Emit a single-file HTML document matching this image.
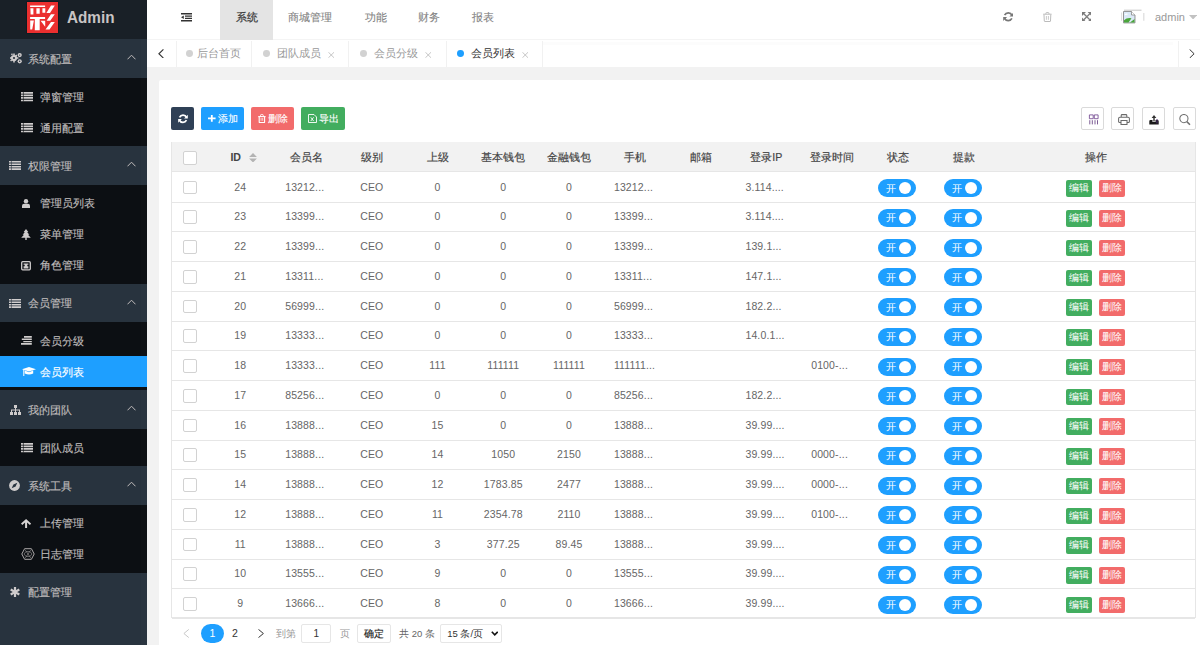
<!DOCTYPE html>
<html><head><meta charset="utf-8"><title>Admin</title>
<style>
*{margin:0;padding:0;box-sizing:border-box}
html,body{width:1200px;height:645px;overflow:hidden}
body{position:relative;background:#f2f2f2;font-family:"Liberation Sans",sans-serif;font-size:11px;color:#666}
.abs{position:absolute}
.ic{position:absolute}
/* sidebar */
.side{position:absolute;left:0;top:0;width:147px;height:645px;background:#28333e}
.scr{position:absolute;left:141px;top:39.3px;width:6px;height:606px;background:rgba(255,255,255,0.01)}
.logo{position:absolute;left:0;top:0;width:147px;height:39.3px;background:#192027}
.logo .mk{position:absolute;left:27.2px;top:1.9px;width:31px;height:31px;background:#eb2f2f;box-shadow:0 0 0 0.6px #0d1a1f}
.logo .mk svg{position:absolute;left:0;top:0}
.logo .tx{position:absolute;left:67px;top:7px;font-size:16.5px;font-weight:bold;color:#c8c4c4;line-height:20px;transform:scaleX(0.925);transform-origin:0 0}
.grp{position:absolute;left:0;width:147px;height:38.6px;color:#bfbbbb;font-size:11px}
.grp .t{position:absolute;left:28.4px;top:0.5px;line-height:38.6px}
.grp .ar{position:absolute;left:126.5px;top:15px;width:9px;height:6px}
.kids{position:absolute;left:0;width:147px;background:#0c0f13}
.kid{position:absolute;left:0;width:147px;height:30.95px;color:#bfbbbb;font-size:11px}
.kid .t{position:absolute;left:39.6px;top:0.6px;line-height:30.95px}
.kid.on{background:#1e9fff;color:#fff}
/* header */
.hdr{position:absolute;left:147px;top:0;width:1053px;height:40px;background:#fff;border-bottom:1px solid #f4f4f4}
.nav{position:absolute;top:0;height:39.6px;line-height:34.5px;color:#858585;font-size:10.8px;-webkit-text-stroke-width:0.12px}
.nav.on{background:#e4e4e4;color:#3a3a3a}
/* tabs */
.tabs{position:absolute;left:147px;top:40px;width:1053px;height:27px;background:#fff}
.vl{position:absolute;top:40.5px;width:1px;height:26.5px;background:#f1f1f1}
.tline{position:absolute;left:543px;top:42.3px;width:629.5px;height:2.4px;background:#fcfcfc}
.dot{position:absolute;top:50px;width:6.8px;height:6.8px;border-radius:50%;background:#d2d2d2}
.tt{position:absolute;top:40px;line-height:27px;color:#999;font-size:10.8px}
.x{position:absolute;top:51.5px}
.card{position:absolute;left:159.3px;top:80px;width:1050px;height:600px;background:#fff;border-radius:2px}
.btn{position:absolute;top:107.3px;height:22.7px;border-radius:2px;color:#fff;font-size:9.5px;line-height:22.7px;text-align:center}
.bl{position:absolute;top:0.6px;-webkit-text-stroke-width:0.12px}
.tbtn{position:absolute;top:107.3px;width:23px;height:23.2px;border:1px solid #dadada;border-radius:2px;background:#fff}
/* table */
.table{position:absolute;left:0;top:0}
.tframe{position:absolute;left:171px;top:141.6px;width:1024.8px;height:476.4px;border:1px solid #e6e6e6}
.thead{position:absolute;left:172px;width:1023px;background:#f2f2f2;border-bottom:1px solid #e6e6e6}
.th{position:absolute;text-align:center;color:#444;font-size:10.6px;font-weight:normal;-webkit-text-stroke:0.18px #444;white-space:nowrap}
.td{position:absolute;text-align:center;color:#666;font-size:10.5px;letter-spacing:0.15px;white-space:nowrap}
.td.ell{text-align:left;padding-left:12px}
.rowb{position:absolute;left:172px;width:1023px;height:1px;background:#e6e6e6}
.cb{position:absolute;width:13.8px;height:13.8px;border:1px solid #d2d2d2;border-radius:2px;background:#fff}
.sort{position:absolute;width:8px;height:12px}
.sort i{position:absolute;left:0;width:0;height:0;border-left:3.75px solid transparent;border-right:3.75px solid transparent}
.sort .up{top:0;border-bottom:3.75px solid #b5b5b5}
.sort .dn{top:5.25px;border-top:3.75px solid #b5b5b5}
.sw{position:absolute;width:38px;height:18px;border-radius:9px;background:#1e9fff;color:#fff}
.sw span{position:absolute;left:8.5px;top:0.5px;line-height:18px;font-size:10px}
.sw i{position:absolute;left:21.5px;top:3px;width:12px;height:12px;border-radius:50%;background:#fff}
.bt{position:absolute;width:26px;height:16.7px;border-radius:2px;color:#fff;font-size:9.5px;line-height:16.7px;text-align:center}
.bt.g{background:#42ad5f}
.bt.r{background:#f26b6b}
.grp .t,.kid .t{-webkit-text-stroke-width:0.15px}
.nav.on{-webkit-text-stroke-width:0.2px}

</style></head><body>
<div class="side">
  <div class="logo">
    <div class="mk"><svg width="31" height="31" viewBox="0 0 31 31"><path fill="#fff" d="M3.1 3.4H18.1V5H3.1z M3.4 6.3H6.4V12.6H3.6z M9.4 6.3H12.7V11.8H9.4z M15.4 6.3H18.3V10.8H15.4z M3.1 15H18.1V16.9H3.1z M7.8 16.9H12.7V28.2H7.8z M3.2 18.6H6.9L5.2 27.6H3.2z M13.6 18.8H18.2V24.8z M24 3.4H27.8L23 10.9H19.4z M24 12.2H27.8L23.2 18.8H19.6z M24 20H27.8L22.5 27.6H18.5z"/></svg></div>
    <div class="tx">Admin</div>
  </div>
  <!-- g1 -->
  <div class="grp" style="top:39.3px">
    <svg class="ic" style="left:9.5px;top:13px" width="13" height="12" viewBox="0 0 13 12"><g fill="#cfcccc"><circle cx="4" cy="6" r="3.1"/><path d="M3.2 1.6h1.6v1.4h-1.6zM3.2 9h1.6v1.4h-1.6zM-0.4 5.2h1.4v1.6h-1.4zM7 5.2h1.4v1.6H7zM0.9 2.3l1.1-1.1 1 1-1.1 1.1zM5 6.4l1.1-1.1 1 1-1.1 1.1zM1.1 9.6l-1-1 1.1-1.1 1 1zM6.2 4.7l-1-1 1.1-1.1 1 1z"/><circle cx="9.7" cy="3.1" r="2.1"/><circle cx="9.7" cy="9.3" r="2.1"/></g><circle cx="4" cy="6" r="1.1" fill="#28333e"/><circle cx="9.7" cy="3.1" r="0.7" fill="#28333e"/><circle cx="9.7" cy="9.3" r="0.7" fill="#28333e"/></svg>
    <span class="t">系统配置</span>
    <svg class="ar" viewBox="0 0 9 6"><path d="M0.5 5.3 L4.5 1.2 L8.5 5.3" fill="none" stroke="#bfbbbb" stroke-width="1"/></svg>
  </div>
  <div class="kids" style="top:77.9px;height:68.1px">
    <div class="kid" style="top:3.1px"><svg class="ic" style="left:20.7px;top:11.2px" width="12" height="9.4" viewBox="0 0 12 9.4"><path d="M0 0h12v1.7H0zM0 2.55h12v1.7H0zM0 5.1h12v1.7H0zM0 7.65h12v1.7H0z" fill="#d0cdcd"/><path d="M2.4 0v9.4" stroke="#0c0f13" stroke-width="0.6"/></svg><span class="t">弹窗管理</span></div>
    <div class="kid" style="top:34.05px"><svg class="ic" style="left:20.7px;top:11.2px" width="12" height="9.4" viewBox="0 0 12 9.4"><path d="M0 0h12v1.7H0zM0 2.55h12v1.7H0zM0 5.1h12v1.7H0zM0 7.65h12v1.7H0z" fill="#d0cdcd"/><path d="M2.4 0v9.4" stroke="#0c0f13" stroke-width="0.6"/></svg><span class="t">通用配置</span></div>
  </div>
  <!-- g2 -->
  <div class="grp" style="top:146px">
    <svg class="ic" style="left:9.3px;top:15px" width="12" height="9" viewBox="0 0 12 9"><path d="M0 0h12v1.6H0zM0 2.45h12v1.6H0zM0 4.9h12v1.6H0zM0 7.35h12v1.6H0z" fill="#d0cdcd"/><path d="M2.4 0v9" stroke="#28333e" stroke-width="0.6"/></svg>
    <span class="t">权限管理</span>
    <svg class="ar" viewBox="0 0 9 6"><path d="M0.5 5.3 L4.5 1.2 L8.5 5.3" fill="none" stroke="#bfbbbb" stroke-width="1"/></svg>
  </div>
  <div class="kids" style="top:184.6px;height:99.05px">
    <div class="kid" style="top:3.1px"><svg class="ic" style="left:21.5px;top:11.5px" width="8" height="9" viewBox="0 0 8 9"><circle cx="4" cy="2.3" r="2.2" fill="#cfcccc"/><path d="M0 9 V6.8 Q0 4.8 2.2 4.8 H5.8 Q8 4.8 8 6.8 V9z" fill="#cfcccc"/></svg><span class="t">管理员列表</span></div>
    <div class="kid" style="top:34.05px"><svg class="ic" style="left:21px;top:10px" width="10" height="11" viewBox="0 0 10 11"><path d="M5 0 L7.3 3 H6.2 L8.3 5.7 H7 L9.8 8.8 H5.7 V11 H4.3 V8.8 H0.2 L3 5.7 H1.7 L3.8 3 H2.7z" fill="#cfcccc"/></svg><span class="t">菜单管理</span></div>
    <div class="kid" style="top:65px"><svg class="ic" style="left:21px;top:11.5px" width="10" height="9.5" viewBox="0 0 10 9.5"><rect x="0.7" y="0.7" width="8.6" height="8.1" rx="1" fill="none" stroke="#cfcccc" stroke-width="1.3"/><path d="M2.6 2.4h4.8v1.3H6.3v1.5h1.1v2.3H2.6V5.2h1.1V3.7H2.6z" fill="#cfcccc"/></svg><span class="t">角色管理</span></div>
  </div>
  <!-- g3 -->
  <div class="grp" style="top:283.65px">
    <svg class="ic" style="left:9.3px;top:15px" width="12" height="9" viewBox="0 0 12 9"><path d="M0 0h12v1.6H0zM0 2.45h12v1.6H0zM0 4.9h12v1.6H0zM0 7.35h12v1.6H0z" fill="#d0cdcd"/><path d="M2.4 0v9" stroke="#28333e" stroke-width="0.6"/></svg>
    <span class="t">会员管理</span>
    <svg class="ar" viewBox="0 0 9 6"><path d="M0.5 5.3 L4.5 1.2 L8.5 5.3" fill="none" stroke="#bfbbbb" stroke-width="1"/></svg>
  </div>
  <div class="kids" style="top:322.25px;height:68.1px">
    <div class="kid" style="top:3.1px"><svg class="ic" style="left:21.2px;top:10.7px" width="11" height="9" viewBox="0 0 11 9"><path d="M3 0h7.8v1.8H3zM0.8 2.6h10v1.4h-10zM2.3 4.9h8.5v1.3H2.3zM0 7.1h10.8v1.7H0z" fill="#d0cdcd"/></svg><span class="t">会员分级</span></div>
    <div class="kid on" style="top:34.05px"><svg class="ic" style="left:21.5px;top:10.7px" width="14" height="9.5" viewBox="0 0 14 9.5"><path d="M0 2.3 L7 0 L14 2.3 L7 4.6z M2.8 3.6 V6.6 Q7 8.3 11.2 6.6 V3.6 L7 5.2z M1.3 2.6 H2.3 V9.3 H1.3z" fill="#fff"/></svg><span class="t">会员列表</span></div>
  </div>
  <!-- g4 -->
  <div class="grp" style="top:390.35px">
    <svg class="ic" style="left:9.5px;top:14.5px" width="11" height="10" viewBox="0 0 11 10"><path d="M4 0h3v3H6v1.5h4V7h1v3H8V7h1V5.5H6V7h1v3H4V7h1V5.5H2V7h1v3H0V7h1V4.5h4V3H4z" fill="#cfcccc"/></svg>
    <span class="t">我的团队</span>
    <svg class="ar" viewBox="0 0 9 6"><path d="M0.5 5.3 L4.5 1.2 L8.5 5.3" fill="none" stroke="#bfbbbb" stroke-width="1"/></svg>
  </div>
  <div class="kids" style="top:428.95px;height:37.15px">
    <div class="kid" style="top:3.1px"><svg class="ic" style="left:20.7px;top:11.2px" width="12" height="9.4" viewBox="0 0 12 9.4"><path d="M0 0h12v1.7H0zM0 2.55h12v1.7H0zM0 5.1h12v1.7H0zM0 7.65h12v1.7H0z" fill="#d0cdcd"/><path d="M2.4 0v9.4" stroke="#0c0f13" stroke-width="0.6"/></svg><span class="t">团队成员</span></div>
  </div>
  <!-- g5 -->
  <div class="grp" style="top:466.1px">
    <svg class="ic" style="left:9px;top:14px" width="11" height="11" viewBox="0 0 11 11"><circle cx="5.5" cy="5.5" r="5.4" fill="#cfcccc"/><path d="M8.3 2.7 L6.6 6.6 L2.7 8.3 L4.4 4.4z" fill="#28333e"/></svg>
    <span class="t">系统工具</span>
    <svg class="ar" viewBox="0 0 9 6"><path d="M0.5 5.3 L4.5 1.2 L8.5 5.3" fill="none" stroke="#bfbbbb" stroke-width="1"/></svg>
  </div>
  <div class="kids" style="top:504.7px;height:68.1px">
    <div class="kid" style="top:3.1px"><svg class="ic" style="left:21.2px;top:11.3px" width="10.2" height="9.4" viewBox="0 0 10.2 9.4"><path d="M5.1 0 L10.2 4.6 L8.9 5.9 L6.1 3.5 V9.4 H4.1 V3.5 L1.3 5.9 L0 4.6z" fill="#d6d3d3"/></svg><span class="t">上传管理</span></div>
    <div class="kid" style="top:34.05px"><svg class="ic" style="left:20.6px;top:9.6px" width="14" height="12" viewBox="0 0 14 12"><path d="M3.6 0.7 H10.4 L13.2 6 L10.4 11.3 H3.6 L0.8 6z" fill="none" stroke="#bdb9b9" stroke-width="0.9"/><path d="M4.3 2.2 L9.7 9.8 M9.7 2.2 L4.3 9.8 M3 6 L5 3.6 H9 L11 6 L9 8.4 H5z" fill="none" stroke="#8d8a8a" stroke-width="0.7"/></svg><span class="t">日志管理</span></div>
  </div>
  <!-- g6 -->
  <div class="grp" style="top:572.8px">
    <svg class="ic" style="left:10px;top:14.5px" width="10" height="10" viewBox="0 0 10 10"><path d="M5 0v10M0.7 2.5l8.6 5M0.7 7.5l8.6-5" stroke="#cfcccc" stroke-width="2.2"/></svg>
    <span class="t">配置管理</span>
  </div>
  <div class="scr"></div>
</div>

<!-- header -->
<div class="hdr"></div>
<svg class="ic" style="left:180.5px;top:13px" width="11.5" height="8.5" viewBox="0 0 11.5 8.5"><path d="M0 0h11.5v1.4H0zM4 2.4h7.5v1.4H4zM4 4.7h7.5v1.4H4zM0 7.1h11.5v1.4H0zM0 4.25 L2.8 2.4 V6.1z" fill="#333"/></svg>
<div class="nav on" style="left:220px;width:53px;text-align:center">系统</div>
<div class="nav" style="left:288.3px">商城管理</div>
<div class="nav" style="left:364.8px">功能</div>
<div class="nav" style="left:418px">财务</div>
<div class="nav" style="left:472px">报表</div>
<svg class="ic" style="left:1002.5px;top:12px" width="10.5" height="9.5" viewBox="0 0 10.5 9.5"><path d="M9 3.4 A4.1 4.1 0 0 0 1.6 3.2 M1.5 6.1 A4.1 4.1 0 0 0 8.9 6.3" fill="none" stroke="#777" stroke-width="1.7"/><path d="M10.3 0.6 V4.5 H6.4z M0.2 8.9 V5 H4.1z" fill="#777"/></svg>
<svg class="ic" style="left:1042.8px;top:11.8px" width="8.8" height="10" viewBox="0 0 8.8 10"><path d="M0.2 2.2h8.4" stroke="#bbb" stroke-width="1"/><path d="M2.9 2.2V1.2Q2.9 0.5 3.6 0.5h1.6q0.7 0 0.7 0.7v1" fill="none" stroke="#bbb" stroke-width="0.9"/><path d="M1 2.6 L1.3 9.1 Q1.3 9.5 1.8 9.5 H7 Q7.5 9.5 7.5 9.1 L7.8 2.6" fill="none" stroke="#bbb" stroke-width="1"/><path d="M3.4 4v3.8M5.4 4v3.8" stroke="#bbb" stroke-width="0.8"/></svg>
<svg class="ic" style="left:1081.6px;top:11.9px" width="9.6" height="9.6" viewBox="0 0 9.6 9.6"><path d="M1.8 1.8 L7.8 7.8 M7.8 1.8 L1.8 7.8" stroke="#808080" stroke-width="1.3"/><path d="M0 0h4L0 4zM9.6 0v4L5.6 0zM0 9.6V5.6L4 9.6zM9.6 9.6H5.6L9.6 5.6z" fill="#7a7a7a"/></svg>
<svg class="ic" style="left:1120px;top:9px" width="26" height="14" viewBox="0 0 26 14"><path d="M4 1.2 H21.5" stroke="#c4c4c4" stroke-width="1"/><path d="M1.6 3.5 V11.8" stroke="#dcdcdc" stroke-width="1"/><path d="M23.8 4 V11.8" stroke="#dcdcdc" stroke-width="1.2"/></svg>
<svg class="ic" style="left:1123px;top:11.4px" width="12.5" height="12.4" viewBox="0 0 12.5 12.4"><path d="M0.5 0.5 H8.5 L12 4 V11.9 H0.5z" fill="#dbe9f7" stroke="#8a8a8a" stroke-width="0.9"/><path d="M8.5 0.5 V4 H12" fill="#fff" stroke="#8a8a8a" stroke-width="0.8"/><path d="M1 11.5 L1 9.2 Q4 6.5 8.5 7.3 L5.5 11.5z M7 11.5 L11.5 8 V11.5z" fill="#4aa63b"/><path d="M2 3.8 Q3 2.8 4.5 3.4" fill="none" stroke="#fff" stroke-width="1.2"/></svg>
<div class="abs" style="left:1155px;top:0;line-height:34.5px;color:#999;font-size:11px">admin</div>
<svg class="ic" style="left:1188.7px;top:14.7px" width="8.2" height="4.5" viewBox="0 0 8.2 4.5"><path d="M0 0h8.2L4.1 4.5z" fill="#c2c2c2"/></svg>

<!-- tabs -->
<div class="tabs"></div>
<div class="vl" style="left:175.5px"></div>
<div class="vl" style="left:251.4px"></div>
<div class="vl" style="left:348.3px"></div>
<div class="vl" style="left:445.5px"></div>
<div class="vl" style="left:542.4px"></div>
<div class="vl" style="left:1177.9px"></div>
<div class="tline"></div>
<svg class="ic" style="left:158px;top:48.6px" width="6" height="9.5" viewBox="0 0 6 9.5"><path d="M5.4 0.4 L0.9 4.75 L5.4 9.1" fill="none" stroke="#333" stroke-width="1.1"/></svg>
<svg class="ic" style="left:1189px;top:48.7px" width="6" height="9.5" viewBox="0 0 6 9.5"><path d="M0.6 0.4 L5.1 4.75 L0.6 9.1" fill="none" stroke="#333" stroke-width="1"/></svg>
<i class="dot" style="left:186.2px"></i><span class="tt" style="left:197px">后台首页</span>
<i class="dot" style="left:263.1px"></i><span class="tt" style="left:276.5px">团队成员</span><svg class="x" style="left:327.6px" width="6.5" height="6" viewBox="0 0 6.5 6"><path d="M0.4 0.2 L6.1 5.8 M6.1 0.2 L0.4 5.8" stroke="#b8b8b8" stroke-width="0.8"/></svg>
<i class="dot" style="left:360.2px"></i><span class="tt" style="left:374px">会员分级</span><svg class="x" style="left:424.9px" width="6.5" height="6" viewBox="0 0 6.5 6"><path d="M0.4 0.2 L6.1 5.8 M6.1 0.2 L0.4 5.8" stroke="#b8b8b8" stroke-width="0.8"/></svg>
<i class="dot" style="left:456.9px;background:#1e9fff"></i><span class="tt" style="left:471px;color:#333">会员列表</span><svg class="x" style="left:521.7px" width="6.5" height="6" viewBox="0 0 6.5 6"><path d="M0.4 0.2 L6.1 5.8 M6.1 0.2 L0.4 5.8" stroke="#b8b8b8" stroke-width="0.8"/></svg>

<div class="card"></div>
<div class="btn" style="left:171px;width:23px;background:#2f4056"><svg style="position:absolute;left:6.5px;top:6.8px" width="10" height="9.5" viewBox="0 0 10.5 9.5"><path d="M9 3.4 A4.1 4.1 0 0 0 1.6 3.2 M1.5 6.1 A4.1 4.1 0 0 0 8.9 6.3" fill="none" stroke="#fff" stroke-width="1.8"/><path d="M10.3 0.6 V4.5 H6.4z M0.2 8.9 V5 H4.1z" fill="#fff"/></svg></div>
<div class="btn" style="left:200.8px;width:43px;background:#1e9fff"><svg style="position:absolute;left:7.4px;top:8.2px" width="7.6" height="6.8" viewBox="0 0 7.6 6.8"><path d="M2.9 0h1.8v2.5h2.9v1.8H4.7v2.5H2.9V4.3H0V2.5h2.9z" fill="#fff"/></svg><span class="bl" style="left:17.5px">添加</span></div>
<div class="btn" style="left:251px;width:43.2px;background:#f26b6b"><svg style="position:absolute;left:6.9px;top:6.6px" width="7.8" height="9.2" viewBox="0 0 7.8 9.2"><path d="M0.2 2.6h7.4" stroke="#fff" stroke-width="1.1"/><path d="M2.6 2.3V1.2Q2.6 0.5 3.3 0.5h1.2q0.7 0 0.7 0.7v1.1" fill="none" stroke="#fff" stroke-width="0.9"/><path d="M1.2 3 V8 Q1.2 8.6 1.8 8.6 H6 Q6.6 8.6 6.6 8 V3" fill="none" stroke="#fff" stroke-width="1.1"/><path d="M3.1 4v2.8M4.7 4v2.8" stroke="#fff" stroke-width="0.7"/></svg><span class="bl" style="left:17px">删除</span></div>
<div class="btn" style="left:301.4px;width:43.4px;background:#42ad5f"><svg style="position:absolute;left:6.6px;top:7px" width="9" height="9" viewBox="0 0 9 9"><path d="M0.5 0.5 H6 L8.5 3 V8.5 H0.5z" fill="none" stroke="#fff" stroke-width="0.9"/><path d="M2.8 3.3 L5.6 7 M5.6 3.3 L2.8 7" stroke="#fff" stroke-width="0.9"/></svg><span class="bl" style="left:17.6px">导出</span></div>

<div class="tbtn" style="left:1081.3px"><svg style="position:absolute;left:5.7px;top:5.7px" width="11" height="11" viewBox="0 0 11 11"><path d="M1.4 0.9h3.8v3.8H1.4zM6.3 0.9h3.8v3.8H6.3z" fill="none" stroke="#6b3d8a" stroke-width="0.8"/><path d="M1.8 6.2v4.2M4.3 6.2v4.2M7 6.2v4.2M9.5 6.2v4.2" stroke="#6d4a88" stroke-width="0.9"/></svg></div>
<div class="tbtn" style="left:1111.3px"><svg style="position:absolute;left:5.5px;top:5.6px" width="12" height="11" viewBox="0 0 12 11"><path d="M3.2 3.2V1.5Q3.2 0.6 4.1 0.6h3.8q0.9 0 0.9 0.9V3.2M3 8.5H1.6Q0.6 8.5 0.6 7.5V4.6Q0.6 3.3 1.9 3.3h8.2q1.3 0 1.3 1.3v2.9q0 1-1 1H9M3 6.4h6v4H3z" fill="none" stroke="#6a6a6a" stroke-width="1.05"/></svg></div>
<div class="tbtn" style="left:1142px"><svg style="position:absolute;left:6px;top:6.3px" width="10" height="10" viewBox="0 0 10 10"><path d="M0.3 6.3 Q0.3 5 1.5 5 H3.5 V7 H6.5 V5 H8.5 Q9.7 5 9.7 6.3 V9.5 H0.3z" fill="#1a1a1a"/><path d="M4.3 6.5 V3 H2.6 L5 0 L7.4 3 H5.7 V6.5z" fill="#333"/><path d="M8 4v4.5" stroke="#4a2a6a" stroke-width="1"/></svg></div>
<div class="tbtn" style="left:1172.5px"><svg style="position:absolute;left:5.5px;top:5.5px" width="12" height="12" viewBox="0 0 12 12"><circle cx="4.9" cy="4.6" r="4.1" fill="none" stroke="#707070" stroke-width="1.05"/><path d="M7.8 7.6 L11 10.8" stroke="#707070" stroke-width="1.5"/></svg></div>

<div class="tframe"></div>

<!-- pager -->
<svg class="ic" style="left:183.2px;top:629px" width="6.3" height="9" viewBox="0 0 6.3 9"><path d="M5.8 0.4 L0.9 4.5 L5.8 8.6" fill="none" stroke="#c8c8c8" stroke-width="1"/></svg>
<div class="abs" style="left:200.7px;top:623.7px;width:23.6px;height:19.6px;border-radius:10px;background:#1e9fff;color:#fff;text-align:center;line-height:19.6px;font-size:10.5px">1</div>
<div class="abs" style="left:229px;top:623.7px;width:12px;line-height:19.6px;text-align:center;color:#333;font-size:10.5px">2</div>
<svg class="ic" style="left:258px;top:629px" width="6.3" height="9" viewBox="0 0 6.3 9"><path d="M0.5 0.4 L5.4 4.5 L0.5 8.6" fill="none" stroke="#333" stroke-width="1"/></svg>
<div class="abs" style="left:275.5px;top:623.7px;line-height:19.6px;color:#999;font-size:9.5px">到第</div>
<div class="abs" style="left:301.2px;top:623.7px;width:30.3px;height:19.8px;border:1px solid #e6e6e6;border-radius:2px;background:#fff;text-align:center;line-height:18px;color:#333;font-size:10px">1</div>
<div class="abs" style="left:339.5px;top:623.7px;line-height:19.6px;color:#999;font-size:9.5px">页</div>
<div class="abs" style="left:356.7px;top:623.7px;width:34.5px;height:19.8px;border:1px solid #e6e6e6;border-radius:2px;background:#fff;text-align:center;line-height:18px;color:#222;font-size:9.6px;-webkit-text-stroke-width:0.15px">确定</div>
<div class="abs" style="left:399px;top:623.7px;line-height:19.6px;color:#666;font-size:9.5px">共 20 条</div>
<div class="abs" style="left:440.2px;top:623.7px;width:61.4px;height:19.8px;border:1px solid #e6e6e6;border-radius:2px;background:#fff;line-height:18px;color:#333;font-size:9.5px;padding-left:6px">15 条/页</div>
<svg class="ic" style="left:490.7px;top:631px" width="7.5" height="5" viewBox="0 0 7.5 5"><path d="M0.8 0.8 L3.75 3.8 L6.7 0.8" fill="none" stroke="#111" stroke-width="1.6"/></svg>

<div class="table">
<div class="thead" style="top:142.0px;height:29.75px"></div><div class="cb" style="left:183.3px;top:150.8px"></div><div class="th" style="left:230.4px;top:142.0px;height:29.75px;line-height:30.75px;font-weight:bold;-webkit-text-stroke:0">ID</div><svg class="abs" style="left:248.6px;top:152.9px" width="8" height="9.6" viewBox="0 0 8 9.6"><path d="M4 0.1 L7.9 4 H0.1z M0.1 5.5 H7.9 L4 9.5z" fill="#b3b3b3"/></svg><div class="th" style="left:273.15px;width:65.75px;top:142.0px;height:29.75px;line-height:30.75px">会员名</div><div class="th" style="left:338.9px;width:65.75px;top:142.0px;height:29.75px;line-height:30.75px">级别</div><div class="th" style="left:404.65px;width:65.75px;top:142.0px;height:29.75px;line-height:30.75px">上级</div><div class="th" style="left:470.4px;width:65.75px;top:142.0px;height:29.75px;line-height:30.75px">基本钱包</div><div class="th" style="left:536.15px;width:65.75px;top:142.0px;height:29.75px;line-height:30.75px">金融钱包</div><div class="th" style="left:601.9px;width:65.75px;top:142.0px;height:29.75px;line-height:30.75px">手机</div><div class="th" style="left:667.65px;width:65.75px;top:142.0px;height:29.75px;line-height:30.75px">邮箱</div><div class="th" style="left:733.4px;width:65.75px;top:142.0px;height:29.75px;line-height:30.75px">登录IP</div><div class="th" style="left:799.15px;width:65.75px;top:142.0px;height:29.75px;line-height:30.75px">登录时间</div><div class="th" style="left:864.9px;width:65.75px;top:142.0px;height:29.75px;line-height:30.75px">状态</div><div class="th" style="left:930.65px;width:65.75px;top:142.0px;height:29.75px;line-height:30.75px">提款</div><div class="th" style="left:996.4px;width:198.89999999999998px;top:142.0px;height:29.75px;line-height:30.75px">操作</div><div class="rowb" style="top:201.5px"></div><div class="cb" style="left:183.3px;top:180.55px"></div><div class="td" style="left:207.4px;width:65.75px;top:172.55px;height:29.75px;line-height:29.75px">24</div><div class="td ell" style="left:273.15px;width:65.75px;top:172.55px;height:29.75px;line-height:29.75px">13212...</div><div class="td" style="left:338.9px;width:65.75px;top:172.55px;height:29.75px;line-height:29.75px">CEO</div><div class="td" style="left:404.65px;width:65.75px;top:172.55px;height:29.75px;line-height:29.75px">0</div><div class="td" style="left:470.4px;width:65.75px;top:172.55px;height:29.75px;line-height:29.75px">0</div><div class="td" style="left:536.15px;width:65.75px;top:172.55px;height:29.75px;line-height:29.75px">0</div><div class="td ell" style="left:601.9px;width:65.75px;top:172.55px;height:29.75px;line-height:29.75px">13212...</div><div class="td ell" style="left:733.4px;width:65.75px;top:172.55px;height:29.75px;line-height:29.75px">3.114....</div><div class="sw" style="left:877.9px;top:179.05px"><span>开</span><i></i></div><div class="sw" style="left:943.65px;top:179.05px"><span>开</span><i></i></div><div class="bt g" style="left:1065.8px;top:180.25px">编辑</div><div class="bt r" style="left:1099.3px;top:180.25px">删除</div><div class="rowb" style="top:231.25px"></div><div class="cb" style="left:183.3px;top:210.3px"></div><div class="td" style="left:207.4px;width:65.75px;top:202.3px;height:29.75px;line-height:29.75px">23</div><div class="td ell" style="left:273.15px;width:65.75px;top:202.3px;height:29.75px;line-height:29.75px">13399...</div><div class="td" style="left:338.9px;width:65.75px;top:202.3px;height:29.75px;line-height:29.75px">CEO</div><div class="td" style="left:404.65px;width:65.75px;top:202.3px;height:29.75px;line-height:29.75px">0</div><div class="td" style="left:470.4px;width:65.75px;top:202.3px;height:29.75px;line-height:29.75px">0</div><div class="td" style="left:536.15px;width:65.75px;top:202.3px;height:29.75px;line-height:29.75px">0</div><div class="td ell" style="left:601.9px;width:65.75px;top:202.3px;height:29.75px;line-height:29.75px">13399...</div><div class="td ell" style="left:733.4px;width:65.75px;top:202.3px;height:29.75px;line-height:29.75px">3.114....</div><div class="sw" style="left:877.9px;top:208.8px"><span>开</span><i></i></div><div class="sw" style="left:943.65px;top:208.8px"><span>开</span><i></i></div><div class="bt g" style="left:1065.8px;top:210.0px">编辑</div><div class="bt r" style="left:1099.3px;top:210.0px">删除</div><div class="rowb" style="top:261.0px"></div><div class="cb" style="left:183.3px;top:240.05px"></div><div class="td" style="left:207.4px;width:65.75px;top:232.05px;height:29.75px;line-height:29.75px">22</div><div class="td ell" style="left:273.15px;width:65.75px;top:232.05px;height:29.75px;line-height:29.75px">13399...</div><div class="td" style="left:338.9px;width:65.75px;top:232.05px;height:29.75px;line-height:29.75px">CEO</div><div class="td" style="left:404.65px;width:65.75px;top:232.05px;height:29.75px;line-height:29.75px">0</div><div class="td" style="left:470.4px;width:65.75px;top:232.05px;height:29.75px;line-height:29.75px">0</div><div class="td" style="left:536.15px;width:65.75px;top:232.05px;height:29.75px;line-height:29.75px">0</div><div class="td ell" style="left:601.9px;width:65.75px;top:232.05px;height:29.75px;line-height:29.75px">13399...</div><div class="td ell" style="left:733.4px;width:65.75px;top:232.05px;height:29.75px;line-height:29.75px">139.1...</div><div class="sw" style="left:877.9px;top:238.55px"><span>开</span><i></i></div><div class="sw" style="left:943.65px;top:238.55px"><span>开</span><i></i></div><div class="bt g" style="left:1065.8px;top:239.75px">编辑</div><div class="bt r" style="left:1099.3px;top:239.75px">删除</div><div class="rowb" style="top:290.75px"></div><div class="cb" style="left:183.3px;top:269.8px"></div><div class="td" style="left:207.4px;width:65.75px;top:261.8px;height:29.75px;line-height:29.75px">21</div><div class="td ell" style="left:273.15px;width:65.75px;top:261.8px;height:29.75px;line-height:29.75px">13311...</div><div class="td" style="left:338.9px;width:65.75px;top:261.8px;height:29.75px;line-height:29.75px">CEO</div><div class="td" style="left:404.65px;width:65.75px;top:261.8px;height:29.75px;line-height:29.75px">0</div><div class="td" style="left:470.4px;width:65.75px;top:261.8px;height:29.75px;line-height:29.75px">0</div><div class="td" style="left:536.15px;width:65.75px;top:261.8px;height:29.75px;line-height:29.75px">0</div><div class="td ell" style="left:601.9px;width:65.75px;top:261.8px;height:29.75px;line-height:29.75px">13311...</div><div class="td ell" style="left:733.4px;width:65.75px;top:261.8px;height:29.75px;line-height:29.75px">147.1...</div><div class="sw" style="left:877.9px;top:268.3px"><span>开</span><i></i></div><div class="sw" style="left:943.65px;top:268.3px"><span>开</span><i></i></div><div class="bt g" style="left:1065.8px;top:269.5px">编辑</div><div class="bt r" style="left:1099.3px;top:269.5px">删除</div><div class="rowb" style="top:320.5px"></div><div class="cb" style="left:183.3px;top:299.55px"></div><div class="td" style="left:207.4px;width:65.75px;top:291.55px;height:29.75px;line-height:29.75px">20</div><div class="td ell" style="left:273.15px;width:65.75px;top:291.55px;height:29.75px;line-height:29.75px">56999...</div><div class="td" style="left:338.9px;width:65.75px;top:291.55px;height:29.75px;line-height:29.75px">CEO</div><div class="td" style="left:404.65px;width:65.75px;top:291.55px;height:29.75px;line-height:29.75px">0</div><div class="td" style="left:470.4px;width:65.75px;top:291.55px;height:29.75px;line-height:29.75px">0</div><div class="td" style="left:536.15px;width:65.75px;top:291.55px;height:29.75px;line-height:29.75px">0</div><div class="td ell" style="left:601.9px;width:65.75px;top:291.55px;height:29.75px;line-height:29.75px">56999...</div><div class="td ell" style="left:733.4px;width:65.75px;top:291.55px;height:29.75px;line-height:29.75px">182.2...</div><div class="sw" style="left:877.9px;top:298.05px"><span>开</span><i></i></div><div class="sw" style="left:943.65px;top:298.05px"><span>开</span><i></i></div><div class="bt g" style="left:1065.8px;top:299.25px">编辑</div><div class="bt r" style="left:1099.3px;top:299.25px">删除</div><div class="rowb" style="top:350.25px"></div><div class="cb" style="left:183.3px;top:329.3px"></div><div class="td" style="left:207.4px;width:65.75px;top:321.3px;height:29.75px;line-height:29.75px">19</div><div class="td ell" style="left:273.15px;width:65.75px;top:321.3px;height:29.75px;line-height:29.75px">13333...</div><div class="td" style="left:338.9px;width:65.75px;top:321.3px;height:29.75px;line-height:29.75px">CEO</div><div class="td" style="left:404.65px;width:65.75px;top:321.3px;height:29.75px;line-height:29.75px">0</div><div class="td" style="left:470.4px;width:65.75px;top:321.3px;height:29.75px;line-height:29.75px">0</div><div class="td" style="left:536.15px;width:65.75px;top:321.3px;height:29.75px;line-height:29.75px">0</div><div class="td ell" style="left:601.9px;width:65.75px;top:321.3px;height:29.75px;line-height:29.75px">13333...</div><div class="td ell" style="left:733.4px;width:65.75px;top:321.3px;height:29.75px;line-height:29.75px">14.0.1...</div><div class="sw" style="left:877.9px;top:327.8px"><span>开</span><i></i></div><div class="sw" style="left:943.65px;top:327.8px"><span>开</span><i></i></div><div class="bt g" style="left:1065.8px;top:329.0px">编辑</div><div class="bt r" style="left:1099.3px;top:329.0px">删除</div><div class="rowb" style="top:380.0px"></div><div class="cb" style="left:183.3px;top:359.05px"></div><div class="td" style="left:207.4px;width:65.75px;top:351.05px;height:29.75px;line-height:29.75px">18</div><div class="td ell" style="left:273.15px;width:65.75px;top:351.05px;height:29.75px;line-height:29.75px">13333...</div><div class="td" style="left:338.9px;width:65.75px;top:351.05px;height:29.75px;line-height:29.75px">CEO</div><div class="td" style="left:404.65px;width:65.75px;top:351.05px;height:29.75px;line-height:29.75px">111</div><div class="td" style="left:470.4px;width:65.75px;top:351.05px;height:29.75px;line-height:29.75px">111111</div><div class="td" style="left:536.15px;width:65.75px;top:351.05px;height:29.75px;line-height:29.75px">111111</div><div class="td ell" style="left:601.9px;width:65.75px;top:351.05px;height:29.75px;line-height:29.75px">111111...</div><div class="td ell" style="left:799.15px;width:65.75px;top:351.05px;height:29.75px;line-height:29.75px">0100-...</div><div class="sw" style="left:877.9px;top:357.55px"><span>开</span><i></i></div><div class="sw" style="left:943.65px;top:357.55px"><span>开</span><i></i></div><div class="bt g" style="left:1065.8px;top:358.75px">编辑</div><div class="bt r" style="left:1099.3px;top:358.75px">删除</div><div class="rowb" style="top:409.75px"></div><div class="cb" style="left:183.3px;top:388.8px"></div><div class="td" style="left:207.4px;width:65.75px;top:380.8px;height:29.75px;line-height:29.75px">17</div><div class="td ell" style="left:273.15px;width:65.75px;top:380.8px;height:29.75px;line-height:29.75px">85256...</div><div class="td" style="left:338.9px;width:65.75px;top:380.8px;height:29.75px;line-height:29.75px">CEO</div><div class="td" style="left:404.65px;width:65.75px;top:380.8px;height:29.75px;line-height:29.75px">0</div><div class="td" style="left:470.4px;width:65.75px;top:380.8px;height:29.75px;line-height:29.75px">0</div><div class="td" style="left:536.15px;width:65.75px;top:380.8px;height:29.75px;line-height:29.75px">0</div><div class="td ell" style="left:601.9px;width:65.75px;top:380.8px;height:29.75px;line-height:29.75px">85256...</div><div class="td ell" style="left:733.4px;width:65.75px;top:380.8px;height:29.75px;line-height:29.75px">182.2...</div><div class="sw" style="left:877.9px;top:387.3px"><span>开</span><i></i></div><div class="sw" style="left:943.65px;top:387.3px"><span>开</span><i></i></div><div class="bt g" style="left:1065.8px;top:388.5px">编辑</div><div class="bt r" style="left:1099.3px;top:388.5px">删除</div><div class="rowb" style="top:439.5px"></div><div class="cb" style="left:183.3px;top:418.55px"></div><div class="td" style="left:207.4px;width:65.75px;top:410.55px;height:29.75px;line-height:29.75px">16</div><div class="td ell" style="left:273.15px;width:65.75px;top:410.55px;height:29.75px;line-height:29.75px">13888...</div><div class="td" style="left:338.9px;width:65.75px;top:410.55px;height:29.75px;line-height:29.75px">CEO</div><div class="td" style="left:404.65px;width:65.75px;top:410.55px;height:29.75px;line-height:29.75px">15</div><div class="td" style="left:470.4px;width:65.75px;top:410.55px;height:29.75px;line-height:29.75px">0</div><div class="td" style="left:536.15px;width:65.75px;top:410.55px;height:29.75px;line-height:29.75px">0</div><div class="td ell" style="left:601.9px;width:65.75px;top:410.55px;height:29.75px;line-height:29.75px">13888...</div><div class="td ell" style="left:733.4px;width:65.75px;top:410.55px;height:29.75px;line-height:29.75px">39.99....</div><div class="sw" style="left:877.9px;top:417.05px"><span>开</span><i></i></div><div class="sw" style="left:943.65px;top:417.05px"><span>开</span><i></i></div><div class="bt g" style="left:1065.8px;top:418.25px">编辑</div><div class="bt r" style="left:1099.3px;top:418.25px">删除</div><div class="rowb" style="top:469.25px"></div><div class="cb" style="left:183.3px;top:448.3px"></div><div class="td" style="left:207.4px;width:65.75px;top:440.3px;height:29.75px;line-height:29.75px">15</div><div class="td ell" style="left:273.15px;width:65.75px;top:440.3px;height:29.75px;line-height:29.75px">13888...</div><div class="td" style="left:338.9px;width:65.75px;top:440.3px;height:29.75px;line-height:29.75px">CEO</div><div class="td" style="left:404.65px;width:65.75px;top:440.3px;height:29.75px;line-height:29.75px">14</div><div class="td" style="left:470.4px;width:65.75px;top:440.3px;height:29.75px;line-height:29.75px">1050</div><div class="td" style="left:536.15px;width:65.75px;top:440.3px;height:29.75px;line-height:29.75px">2150</div><div class="td ell" style="left:601.9px;width:65.75px;top:440.3px;height:29.75px;line-height:29.75px">13888...</div><div class="td ell" style="left:733.4px;width:65.75px;top:440.3px;height:29.75px;line-height:29.75px">39.99....</div><div class="td ell" style="left:799.15px;width:65.75px;top:440.3px;height:29.75px;line-height:29.75px">0000-...</div><div class="sw" style="left:877.9px;top:446.8px"><span>开</span><i></i></div><div class="sw" style="left:943.65px;top:446.8px"><span>开</span><i></i></div><div class="bt g" style="left:1065.8px;top:448.0px">编辑</div><div class="bt r" style="left:1099.3px;top:448.0px">删除</div><div class="rowb" style="top:499.0px"></div><div class="cb" style="left:183.3px;top:478.05px"></div><div class="td" style="left:207.4px;width:65.75px;top:470.05px;height:29.75px;line-height:29.75px">14</div><div class="td ell" style="left:273.15px;width:65.75px;top:470.05px;height:29.75px;line-height:29.75px">13888...</div><div class="td" style="left:338.9px;width:65.75px;top:470.05px;height:29.75px;line-height:29.75px">CEO</div><div class="td" style="left:404.65px;width:65.75px;top:470.05px;height:29.75px;line-height:29.75px">12</div><div class="td" style="left:470.4px;width:65.75px;top:470.05px;height:29.75px;line-height:29.75px">1783.85</div><div class="td" style="left:536.15px;width:65.75px;top:470.05px;height:29.75px;line-height:29.75px">2477</div><div class="td ell" style="left:601.9px;width:65.75px;top:470.05px;height:29.75px;line-height:29.75px">13888...</div><div class="td ell" style="left:733.4px;width:65.75px;top:470.05px;height:29.75px;line-height:29.75px">39.99....</div><div class="td ell" style="left:799.15px;width:65.75px;top:470.05px;height:29.75px;line-height:29.75px">0000-...</div><div class="sw" style="left:877.9px;top:476.55px"><span>开</span><i></i></div><div class="sw" style="left:943.65px;top:476.55px"><span>开</span><i></i></div><div class="bt g" style="left:1065.8px;top:477.75px">编辑</div><div class="bt r" style="left:1099.3px;top:477.75px">删除</div><div class="rowb" style="top:528.75px"></div><div class="cb" style="left:183.3px;top:507.8px"></div><div class="td" style="left:207.4px;width:65.75px;top:499.8px;height:29.75px;line-height:29.75px">12</div><div class="td ell" style="left:273.15px;width:65.75px;top:499.8px;height:29.75px;line-height:29.75px">13888...</div><div class="td" style="left:338.9px;width:65.75px;top:499.8px;height:29.75px;line-height:29.75px">CEO</div><div class="td" style="left:404.65px;width:65.75px;top:499.8px;height:29.75px;line-height:29.75px">11</div><div class="td" style="left:470.4px;width:65.75px;top:499.8px;height:29.75px;line-height:29.75px">2354.78</div><div class="td" style="left:536.15px;width:65.75px;top:499.8px;height:29.75px;line-height:29.75px">2110</div><div class="td ell" style="left:601.9px;width:65.75px;top:499.8px;height:29.75px;line-height:29.75px">13888...</div><div class="td ell" style="left:733.4px;width:65.75px;top:499.8px;height:29.75px;line-height:29.75px">39.99....</div><div class="td ell" style="left:799.15px;width:65.75px;top:499.8px;height:29.75px;line-height:29.75px">0100-...</div><div class="sw" style="left:877.9px;top:506.3px"><span>开</span><i></i></div><div class="sw" style="left:943.65px;top:506.3px"><span>开</span><i></i></div><div class="bt g" style="left:1065.8px;top:507.5px">编辑</div><div class="bt r" style="left:1099.3px;top:507.5px">删除</div><div class="rowb" style="top:558.5px"></div><div class="cb" style="left:183.3px;top:537.55px"></div><div class="td" style="left:207.4px;width:65.75px;top:529.55px;height:29.75px;line-height:29.75px">11</div><div class="td ell" style="left:273.15px;width:65.75px;top:529.55px;height:29.75px;line-height:29.75px">13888...</div><div class="td" style="left:338.9px;width:65.75px;top:529.55px;height:29.75px;line-height:29.75px">CEO</div><div class="td" style="left:404.65px;width:65.75px;top:529.55px;height:29.75px;line-height:29.75px">3</div><div class="td" style="left:470.4px;width:65.75px;top:529.55px;height:29.75px;line-height:29.75px">377.25</div><div class="td" style="left:536.15px;width:65.75px;top:529.55px;height:29.75px;line-height:29.75px">89.45</div><div class="td ell" style="left:601.9px;width:65.75px;top:529.55px;height:29.75px;line-height:29.75px">13888...</div><div class="td ell" style="left:733.4px;width:65.75px;top:529.55px;height:29.75px;line-height:29.75px">39.99....</div><div class="sw" style="left:877.9px;top:536.05px"><span>开</span><i></i></div><div class="sw" style="left:943.65px;top:536.05px"><span>开</span><i></i></div><div class="bt g" style="left:1065.8px;top:537.25px">编辑</div><div class="bt r" style="left:1099.3px;top:537.25px">删除</div><div class="rowb" style="top:588.25px"></div><div class="cb" style="left:183.3px;top:567.3px"></div><div class="td" style="left:207.4px;width:65.75px;top:559.3px;height:29.75px;line-height:29.75px">10</div><div class="td ell" style="left:273.15px;width:65.75px;top:559.3px;height:29.75px;line-height:29.75px">13555...</div><div class="td" style="left:338.9px;width:65.75px;top:559.3px;height:29.75px;line-height:29.75px">CEO</div><div class="td" style="left:404.65px;width:65.75px;top:559.3px;height:29.75px;line-height:29.75px">9</div><div class="td" style="left:470.4px;width:65.75px;top:559.3px;height:29.75px;line-height:29.75px">0</div><div class="td" style="left:536.15px;width:65.75px;top:559.3px;height:29.75px;line-height:29.75px">0</div><div class="td ell" style="left:601.9px;width:65.75px;top:559.3px;height:29.75px;line-height:29.75px">13555...</div><div class="td ell" style="left:733.4px;width:65.75px;top:559.3px;height:29.75px;line-height:29.75px">39.99....</div><div class="sw" style="left:877.9px;top:565.8px"><span>开</span><i></i></div><div class="sw" style="left:943.65px;top:565.8px"><span>开</span><i></i></div><div class="bt g" style="left:1065.8px;top:567.0px">编辑</div><div class="bt r" style="left:1099.3px;top:567.0px">删除</div><div class="rowb" style="top:618.0px"></div><div class="cb" style="left:183.3px;top:597.05px"></div><div class="td" style="left:207.4px;width:65.75px;top:589.05px;height:29.75px;line-height:29.75px">9</div><div class="td ell" style="left:273.15px;width:65.75px;top:589.05px;height:29.75px;line-height:29.75px">13666...</div><div class="td" style="left:338.9px;width:65.75px;top:589.05px;height:29.75px;line-height:29.75px">CEO</div><div class="td" style="left:404.65px;width:65.75px;top:589.05px;height:29.75px;line-height:29.75px">8</div><div class="td" style="left:470.4px;width:65.75px;top:589.05px;height:29.75px;line-height:29.75px">0</div><div class="td" style="left:536.15px;width:65.75px;top:589.05px;height:29.75px;line-height:29.75px">0</div><div class="td ell" style="left:601.9px;width:65.75px;top:589.05px;height:29.75px;line-height:29.75px">13666...</div><div class="td ell" style="left:733.4px;width:65.75px;top:589.05px;height:29.75px;line-height:29.75px">39.99....</div><div class="sw" style="left:877.9px;top:595.55px"><span>开</span><i></i></div><div class="sw" style="left:943.65px;top:595.55px"><span>开</span><i></i></div><div class="bt g" style="left:1065.8px;top:596.75px">编辑</div><div class="bt r" style="left:1099.3px;top:596.75px">删除</div>
</div>
</body></html>
